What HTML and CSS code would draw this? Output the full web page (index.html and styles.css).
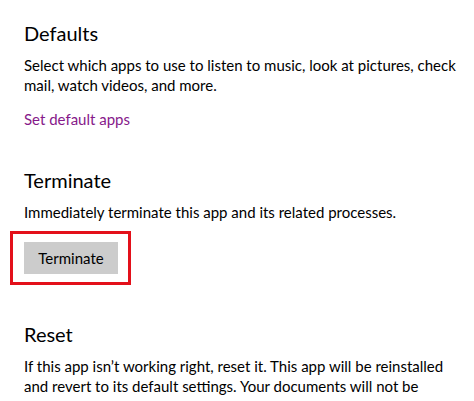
FILE: index.html
```html
<!DOCTYPE html>
<html lang="en">
<head>
  <meta charset="UTF-8">
  <title>App settings</title>
  <link rel="stylesheet" href="styles.css">
</head>
<body>
  <div class="page">
    <section class="group">
      <h2 class="group-title">Defaults</h2>
      <p class="group-text">Select which apps to use to listen to music, look at pictures, check mail, watch videos, and more.</p>
      <a class="group-link" href="#">Set default apps</a>
    </section>

    <section class="group">
      <h2 class="group-title">Terminate</h2>
      <p class="group-text">Immediately terminate this app and its related processes.</p>
      <div class="highlight">
        <button class="action-btn">Terminate</button>
      </div>
    </section>

    <section class="group">
      <h2 class="group-title">Reset</h2>
      <p class="group-text">If this app isn’t working right, reset it. This app will be reinstalled and revert to its default settings. Your documents will not be affected.</p>
    </section>
  </div>
</body>
</html>
```

FILE: styles.css
```css
body {
  margin: 0;
  background-color: #fff;
  color: #000;
  font-family: Lato, "Noto Sans", sans-serif;
}
.page {
  padding: 19px 0 0 24px;
  width: 440px;
}
.group {
  margin-bottom: 35px;
}
.group-title {
  margin: 0 0 8px;
  font-size: 20px;
  font-weight: 400;
  line-height: 28px;
}
.group-text {
  margin: 0;
  font-size: 15px;
  line-height: 20px;
}
.group-link {
  display: inline-block;
  margin: 14px 0 2px;
  font-size: 15px;
  line-height: 20px;
  color: #86198a;
  text-decoration: none;
}
.highlight {
  display: inline-block;
  margin: 9px 0 0 -14px;
  padding: 8px 10px 8px 11px;
  border: 3px solid #e3101a;
}
.action-btn {
  display: block;
  width: 94px;
  height: 32px;
  border: none;
  background-color: #cccccc;
  font-family: inherit;
  font-size: 15px;
  color: #000;
  padding: 0;
}
```
